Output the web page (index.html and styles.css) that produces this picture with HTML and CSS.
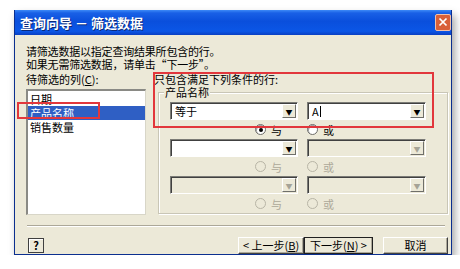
FILE: index.html
```html
<!DOCTYPE html>
<html lang="zh-CN">
  <head>
    <meta charset="UTF-8" />
    <title>查询向导 - 筛选数据</title>
    <link rel="stylesheet" href="styles.css">
  </head>
  <body>
    <div class="window">
      <div class="titlebar">
        <span class="title">查询向导 － 筛选数据</span>
        <span class="close">
          <svg width="16" height="16" viewBox="0 0 16 16">
            <path d="M4 4 L12 12 M12 4 L4 12" stroke="#fff" stroke-width="2" />
          </svg>
        </span>
      </div>

      <div class="client">
        <p class="intro">请筛选数据以指定查询结果所包含的行。<br>如果无需筛选数据，请单击“下一步”。</p>

        <div class="main">
          <div class="columns">
            <div class="label">待筛选的列(<u>C</u>):</div>
            <ul class="listbox">
              <li>日期</li>
              <li class="selected">产品名称</li>
              <li>销售数量</li>
            </ul>
          </div>

          <div class="conditions">
            <div class="label">只包含满足下列条件的行:</div>
            <div class="group">
              <span class="legend">产品名称</span>
              <div class="rules">
                <div class="combo"><span class="value">等于</span><span class="drop">▼</span></div>
                <div class="combo"><span class="value">A<i class="caret"></i></span><span class="drop">▼</span></div>
                <label class="radio left"><span class="dot checked"></span>与</label>
                <label class="radio"><span class="dot"></span>或</label>

                <div class="combo"><span class="value"></span><span class="drop">▼</span></div>
                <div class="combo disabled"><span class="value"></span><span class="drop">▼</span></div>
                <label class="radio left disabled"><span class="dot"></span>与</label>
                <label class="radio disabled"><span class="dot"></span>或</label>

                <div class="combo disabled"><span class="value"></span><span class="drop">▼</span></div>
                <div class="combo disabled"><span class="value"></span><span class="drop">▼</span></div>
                <label class="radio left disabled"><span class="dot"></span>与</label>
                <label class="radio disabled"><span class="dot"></span>或</label>
              </div>
            </div>
          </div>
        </div>

        <div class="separator"></div>

        <div class="footer">
          <button class="btn help">?</button>
          <div class="nav">
            <button class="btn">&lt; 上一步(<u>B</u>)</button>
            <button class="btn default">下一步(<u>N</u>) &gt;</button>
            <button class="btn cancel">取消</button>
          </div>
        </div>
      </div>
    </div>

    <!-- 标注框 -->
    <div class="mark mark-list"></div>
    <div class="mark mark-rule"></div>
  </body>
</html>
```

FILE: styles.css
```css
* {
  box-sizing: border-box;
}

body {
  margin: 0;
  background: #fff;
  font-family: "Noto Sans CJK SC", "DejaVu Sans", sans-serif;
  font-size: 11px;
  color: #000;
}

/* 窗口 */
.window {
  width: 438px;
  height: 245px;
  margin: 10px 0 0 14px;
  border: 1px solid #0b2f8f;
  border-top: 0;
  background: #ece9d8;
  display: flex;
  flex-direction: column;
  box-shadow: 3px 5px 8px rgba(0, 0, 0, 0.35);
}

.titlebar {
  height: 25px;
  padding: 0 0 0 5px;
  display: flex;
  align-items: center;
  justify-content: space-between;
  background: linear-gradient(to bottom, #3d8af7 0%, #1960e6 12%, #0a4fdc 45%, #0b56e6 85%, #0a3fc2 100%);
}

.title {
  color: #fff;
  font-weight: bold;
  font-size: 13px;
  text-shadow: 1px 1px 0 #0a2a7a;
}

.close {
  width: 16px;
  height: 17px;
  margin-top: -1px;
  display: flex;
  align-items: center;
  justify-content: center;
  background: #d9603a;
  border: 1px solid #f3c0a8;
  border-radius: 2px;
}

.client {
  flex: 1;
  padding: 10px 3px 0 11px;
  display: flex;
  flex-direction: column;
}

.intro {
  margin: 0;
  line-height: 13px;
  letter-spacing: -0.2px;
}

.label {
  line-height: 13px;
  height: 13px;
  white-space: nowrap;
}

.main {
  display: flex;
  gap: 8px;
  margin-top: 2px;
}

/* 左侧列表 */
.columns {
  width: 120px;
}

.listbox {
  list-style: none;
  margin: 3px 0 0 0;
  padding: 1px 0;
  height: 126px;
  background: #fff;
  border-top: 2px solid #8a8a85;
  border-left: 2px solid #8a8a85;
  border-right: 1px solid #d8d6c8;
  border-bottom: 1px solid #d8d6c8;
}

.listbox li {
  height: 14px;
  line-height: 14px;
  padding-left: 2px;
}

.listbox .selected {
  background: #2f5fc4;
  color: #fff;
}

/* 右侧条件 */
.conditions {
  flex: 1;
}

.group {
  position: relative;
  height: 122px;
  margin: 6px 0 0 4px;
  padding: 9px 0 0 11px;
  border: 1px solid #c9c6b6;
  box-shadow: inset 1px 1px 0 #fff, 1px 1px 0 #fff;
}

.legend {
  position: absolute;
  top: -7px;
  left: 5px;
  padding: 0 1px;
  line-height: 12px;
  background: #ece9d8;
}

.rules {
  display: grid;
  grid-template-columns: 128px 119px;
  grid-auto-rows: 18px 19px;
  column-gap: 9px;
}

.combo {
  display: flex;
  align-items: center;
  height: 18px;
  background: #fff;
  border-top: 1px solid #7b7b76;
  border-left: 1px solid #7b7b76;
  border-right: 1px solid #fff;
  border-bottom: 1px solid #fff;
  box-shadow: inset 1px 1px 0 #404040;
  padding: 1px;
}

.combo .value {
  flex: 1;
  padding-left: 3px;
  line-height: 14px;
  display: flex;
  align-items: center;
}

.caret {
  width: 1px;
  height: 11px;
  margin-left: 1px;
  background: #000;
}

.drop {
  width: 14px;
  height: 14px;
  font-size: 7px;
  line-height: 14px;
  text-align: center;
  color: #000;
  background: #ece9d8;
  border-top: 1px solid #fff;
  border-left: 1px solid #fff;
  border-right: 1px solid #6f6f6a;
  border-bottom: 1px solid #6f6f6a;
}

.combo.disabled {
  background: #ece9d8;
}

.combo.disabled .drop {
  color: #a5a397;
}

.radio {
  display: flex;
  align-items: center;
  gap: 5px;
  line-height: 12px;
}

.radio.left {
  justify-self: end;
  margin-right: 16px;
}

.dot {
  width: 11px;
  height: 11px;
  border-radius: 50%;
  background: #fff;
  border: 1px solid #6d6d6a;
  box-shadow: inset 1px 1px 0 #a0a0a0;
  display: flex;
  align-items: center;
  justify-content: center;
}

.dot.checked::after {
  content: "";
  width: 4px;
  height: 4px;
  border-radius: 50%;
  background: #000;
}

.radio.disabled {
  color: #aca899;
}

.radio.disabled .dot {
  background: #ece9d8;
  border-color: #b8b5a6;
  box-shadow: none;
}

/* 底部 */
.separator {
  height: 2px;
  margin: 10px 3px 0 1px;
  border-top: 1px solid #aca899;
  border-bottom: 1px solid #fff;
}

.footer {
  display: flex;
  justify-content: space-between;
  margin-top: 10px;
  padding-left: 2px;
}

.nav {
  display: flex;
}

.btn {
  height: 17px;
  padding: 0;
  font-family: inherit;
  font-size: 11px;
  line-height: 13px;
  background: #ece9d8;
  border-top: 1px solid #fff;
  border-left: 1px solid #fff;
  border-right: 1px solid #404040;
  border-bottom: 1px solid #404040;
  box-shadow: inset -1px -1px 0 #aca899;
}

.nav .btn {
  width: 66px;
}

.btn.default {
  width: 69px;
  border: 1px solid #202020;
}

.btn.cancel {
  width: 65px;
  margin-left: 10px;
}

.btn.help {
  width: 16px;
  height: 15px;
  margin-top: 1px;
  font-weight: bold;
  font-size: 11px;
  border: 1px solid #404040;
  box-shadow: inset 1px 1px 0 #fff;
}

/* 红色标注 */
.mark {
  position: absolute;
  border: 2px solid #e2373c;
}

.mark-list {
  left: 17px;
  top: 102px;
  width: 83px;
  height: 17px;
}

.mark-rule {
  left: 153px;
  top: 72px;
  width: 281px;
  height: 56px;
}
```
